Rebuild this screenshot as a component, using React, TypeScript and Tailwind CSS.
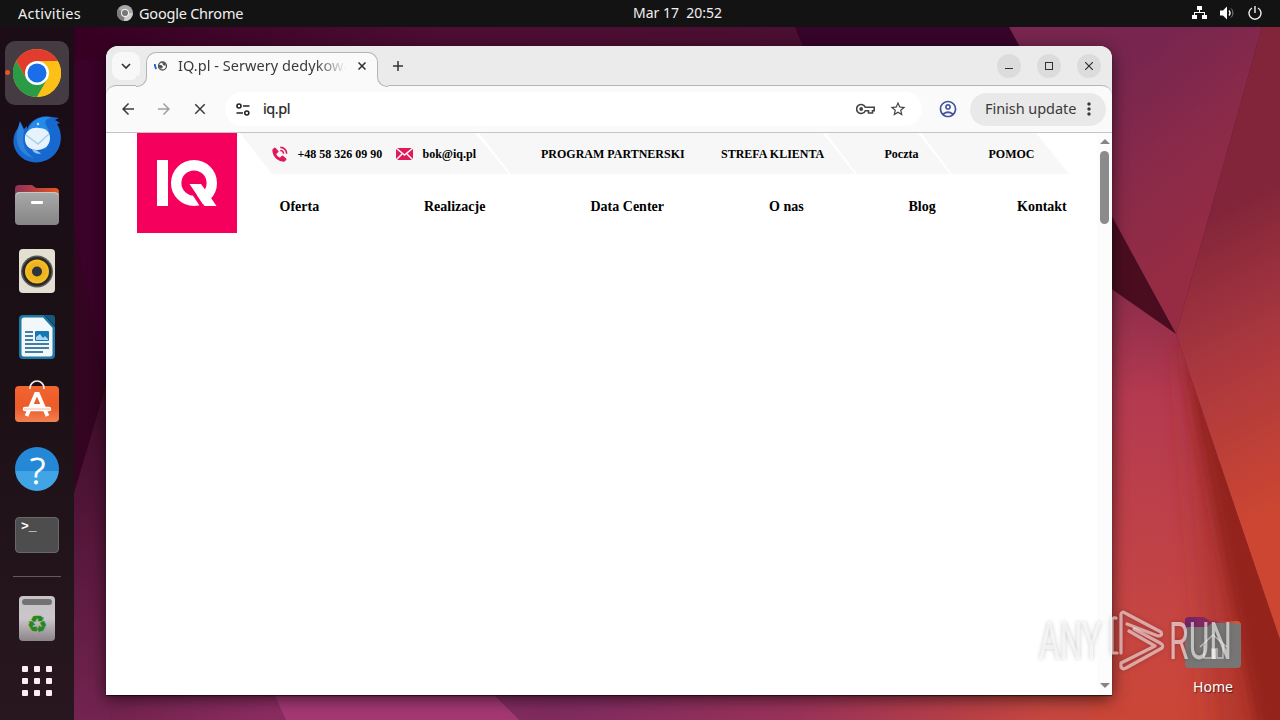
import type { ReactNode } from 'react';
import { BiSolidPhoneCall } from 'react-icons/bi';
import { MdArrowBack, MdArrowForward, MdClose, MdMoreVert, MdOutlineAccountCircle, MdStarBorder } from 'react-icons/md';

function Wallpaper() {
    return (
        <svg className="absolute inset-0" width="1280" height="720" viewBox="0 0 1280 720">
            <defs>
                <linearGradient id="top" x1="74" y1="0" x2="1010" y2="0" gradientUnits="userSpaceOnUse">
                    <stop offset="0" stopColor="#370023" />
                    <stop offset="0.4" stopColor="#4e0d34" />
                    <stop offset="1" stopColor="#48102f" />
                </linearGradient>
                <linearGradient id="left" x1="0" y1="390" x2="0" y2="720" gradientUnits="userSpaceOnUse">
                    <stop offset="0" stopColor="#3f0c2a" />
                    <stop offset="1" stopColor="#732450" />
                </linearGradient>
                <linearGradient id="bottom" x1="74" y1="0" x2="1280" y2="0" gradientUnits="userSpaceOnUse">
                    <stop offset="0" stopColor="#6c2149" />
                    <stop offset="0.16" stopColor="#8b2c60" />
                    <stop offset="0.4" stopColor="#7f2b60" />
                    <stop offset="0.6" stopColor="#9a3259" />
                    <stop offset="0.8" stopColor="#c4463f" />
                    <stop offset="1" stopColor="#ca4636" />
                </linearGradient>
                <linearGradient id="upper" x1="1090" y1="100" x2="1210" y2="250" gradientUnits="userSpaceOnUse">
                    <stop offset="0" stopColor="#78264f" />
                    <stop offset="0.5" stopColor="#8a2a49" />
                    <stop offset="1" stopColor="#962c43" />
                </linearGradient>
                <linearGradient id="right" x1="1200" y1="220" x2="1330" y2="480" gradientUnits="userSpaceOnUse">
                    <stop offset="0" stopColor="#82253a" />
                    <stop offset="0.45" stopColor="#a9373f" />
                    <stop offset="1" stopColor="#cc4632" />
                </linearGradient>
                <linearGradient id="lower" x1="0" y1="290" x2="0" y2="720" gradientUnits="userSpaceOnUse">
                    <stop offset="0" stopColor="#8c2c4a" />
                    <stop offset="0.25" stopColor="#b43a50" />
                    <stop offset="0.75" stopColor="#c54543" />
                    <stop offset="1" stopColor="#ca4636" />
                </linearGradient>
                <filter id="wide" x="-50%" y="-20%" width="200%" height="140%"><feGaussianBlur stdDeviation="14" /></filter>
                <filter id="narrow" x="-50%" y="-20%" width="200%" height="140%"><feGaussianBlur stdDeviation="7" /></filter>
                <clipPath id="facet"><path d="M1090 274L1176 334L1280 640V720H1090z" /></clipPath>
            </defs>
            <rect width="1280" height="720" fill="url(#top)" />
            <path d="M795 27H1010L1112 219V285H900z" fill="#37042a" />
            <rect y="60" width="300" height="400" fill="#3a0228" />
            <path d="M74 230L106 386L74 493z" fill="#330520" />
            <path d="M74 493L106 386L140 386V720H74z" fill="url(#left)" />
            <path d="M106 640H1280V720H106z" fill="url(#bottom)" />
            <path d="M74 640H110V720H74z" fill="url(#left)" />
            <path d="M250 640L286 720H519L440 640z" fill="#a43875" />
            <path d="M1009 27H1262L1176 334z" fill="url(#upper)" />
            <path d="M1262 27H1280V640L1176 334z" fill="url(#right)" />
            <path d="M1080 160L1176 334L1080 265z" fill="#4a0d20" />
            <path d="M1090 274L1176 334L1280 640V720H1090z" fill="url(#lower)" />
            <g clipPath="url(#facet)">
                <path d="M1180 330L1320 640V760H1215z" fill="#a02a20" fillOpacity="0.5" filter="url(#wide)" />
                <path d="M1180 335L1320 640V760H1262z" fill="#8e2019" fillOpacity="0.85" filter="url(#narrow)" />
            </g>
        </svg>
    );
}

function TopBar() {
    return (
        <header className="relative flex h-[27px] shrink-0 items-center justify-between bg-[#131313] pl-[18px] pr-[18px] text-[14.5px] text-[#f0f0f0]">
            <div className="flex w-[576px] items-center">
                <span className="w-[99px] tracking-[0.25px]">Activities</span>
                <svg className="-mt-px" width="16" height="16" viewBox="0 0 16 16">
                    <circle cx="8" cy="8" r="8" fill="#a8a8a8" />
                    <path d="M8 8L1 4A8 8 0 0 0 7 16z" fill="#7c7c7c" />
                    <path d="M8 8h7.8A8 8 0 0 1 7 16z" fill="#d0d0d0" />
                    <circle cx="8" cy="8" r="4" fill="#f2f2f2" />
                    <circle cx="8" cy="8" r="3" fill="#777" />
                </svg>
                <span className="ml-[6px] tracking-[-0.22px]">Google Chrome</span>
            </div>
            <span className="-mt-px flex-1 whitespace-pre pl-[39px] text-[14px] leading-[18px]">Mar 17  20:52</span>
            <div className="-mt-px flex items-center gap-[13px]">
                <svg width="15" height="14" viewBox="0 0 15 14" fill="#fff">
                    <path d="M5 0h5v4H8v2h5v3h2v4h-5V9h2V7H3v2h2v4H0V9h2V6h5V4H5z" />
                </svg>
                <svg width="15" height="14" viewBox="0 0 15 14" fill="none" stroke="#fff">
                    <path d="M0 4.5h3L7 .5v13l-4-4H0z" fill="#fff" stroke="none" />
                    <path d="M9 4.5c1.3 1.5 1.3 3.5 0 5" strokeWidth="1.3" />
                    <path d="M11 2.5c2.5 2.500 2.500 6.500 0 9" stroke="#888" />
                </svg>
                <svg width="14" height="14" viewBox="0 0 14 14" fill="none" stroke="#f0f0f0" strokeWidth="1.4">
                    <path d="M4 2A6 6 0 1 0 10 2M7 0v7" />
                </svg>
            </div>
        </header>
    );
}

function DockItem({ children, active }: { children: ReactNode; active?: boolean }) {
    return (
        <div className={active ? 'flex h-16 w-16 items-center justify-center rounded-[10px] bg-[#443c42]' : 'flex h-[66px] w-16 items-center justify-center'}>
            {children}
        </div>
    );
}

function Dock() {
    return (
        <aside className="relative flex w-[74px] shrink-0 flex-col items-center bg-gradient-to-b from-[#1b0c16] via-[#1b1016] to-[#29171f] pt-[14px]">
            <span className="absolute left-[5px] top-[43px] h-[5px] w-[5px] rounded-full bg-[#e95420]" />
            <DockItem active>
                <svg width="48" height="48" viewBox="0 0 48 48">
                    <circle cx="24" cy="24" r="24" fill="#fbc116" />
                    <path d="M24 0A24 24 0 0 1 44.8 12H24L13.6 30L3.2 12A24 24 0 0 1 24 0z" fill="#e33b2e" />
                    <path d="M3.2 12A24 24 0 0 0 24 48L34.4 30H13.6z" fill="#2a9c46" />
                    <path d="M44.8 12A24 24 0 0 1 24 48L34.4 30L24 12z" fill="#fbc116" />
                    <circle cx="24" cy="24" r="12" fill="#fff" />
                    <circle cx="24" cy="24" r="9.5" fill="#1a6ee8" />
                </svg>
            </DockItem>
            <div className="h-px" />
            <DockItem>
                <svg width="50" height="48" viewBox="0 0 50 48">
                    <path d="M15 14C19 4 30-1 40 2l7 1-4 2 5 3-3 1c6 9 5 23-3 31-9 9-24 10-33 2C0 34-1 22 6 13l2-7 4 8 3-3z" fill="#1769cf" />
                    <path d="M16 15C20 4 31 0 40 3c-7 0-8 4-5 9 5 7 3 17-2 22L18 24z" fill="#258bea" />
                    <path d="M5 17c-2 13 5 24 17 26C11 36 10 27 12 16l-4-9z" fill="#2e83df" />
                    <path d="M13 21c2-6 7-9 14-8 7 0 11 4 11 10 0 7-5 12-13 12-8 0-13-5-12-14z" fill="#e6f3fd" />
                    <path d="M14 20l12 9 11-10" fill="none" stroke="#a9cce9" strokeWidth="1.5" />
                    <path d="M20 34q6 1 9 5-8 0-9-5z" fill="#8cc5f3" />
                    <circle cx="26" cy="9" r="1.2" fill="#c2e3ff" />
                </svg>
            </DockItem>
            <DockItem>
                <svg width="44" height="42" viewBox="0 0 44 42">
                    <defs>
                        <linearGradient id="flap"><stop stopColor="#8d3158" /><stop offset="1" stopColor="#e95420" /></linearGradient>
                        <linearGradient id="steel" x2="0" y2="1"><stop stopColor="#a9a9a9" /><stop offset="1" stopColor="#858585" /></linearGradient>
                    </defs>
                    <path d="M0 12V5q0-4 4-4h13l4 3h19q4 0 4 4v5z" fill="url(#flap)" />
                    <rect y="8" width="44" height="33" rx="4" fill="url(#steel)" />
                    <path d="M1 11q1-2.5 4-2.5h34q3 0 4 2.5" fill="none" stroke="#c8c8c8" />
                    <rect x="16" y="17" width="12" height="3" rx="1" fill="#fff" />
                </svg>
            </DockItem>
            <DockItem>
                <svg width="36" height="44" viewBox="0 0 36 44">
                    <rect width="36" height="44" rx="4" fill="#e4dfd3" />
                    <circle cx="18" cy="22.5" r="16" fill="#595959" />
                    <circle cx="18" cy="22.5" r="14.5" fill="#292929" />
                    <circle cx="18" cy="22.5" r="12" fill="#f6bd20" />
                    <circle cx="18" cy="22.5" r="9.5" fill="#eeb322" />
                    <circle cx="18" cy="22.5" r="5" fill="#2c3339" />
                </svg>
            </DockItem>
            <DockItem>
                <svg width="36" height="44" viewBox="0 0 36 44">
                    <path d="M4 0h21l11 12v28q0 4-4 4H4q-4 0-4-4V4q0-4 4-4z" fill="#1c78a5" />
                    <path d="M25 0h8q3 0 3 3v8z" fill="#155a7e" />
                    <path d="M5 2.5h19L33.5 13v26q0 2.5-2.5 2.5H5Q2.5 41.5 2.5 39V5q0-2.500 2.500-2.500z" fill="#f2f7fa" />
                    <path d="M6 17h8M6 21h8M6 25h8M6 29h24M6 33h24M6 37h18" stroke="#0b5788" strokeWidth="1.7" />
                    <rect x="16" y="16" width="14" height="10" rx="1" fill="#1478b5" />
                    <path d="M17 25v-3l4-3 3 4 2-2 3 3v1z" fill="#a9d7ef" />
                </svg>
            </DockItem>
            <DockItem>
                <svg width="46" height="46" viewBox="0 -1 46 46">
                    <defs>
                        <linearGradient id="bag" x2="0" y2="1"><stop stopColor="#f26430" /><stop offset="0.6" stopColor="#ec5b2a" /><stop offset="1" stopColor="#f18152" /></linearGradient>
                    </defs>
                    <rect x="1" y="5" width="44" height="36" rx="4" fill="url(#bag)" />
                    <path d="M16 8V7a7 7 0 0 1 14 0v1" fill="none" stroke="#f8ece3" strokeWidth="1.7" />
                    <path d="M12.5 35L22 13h2l9.5 22M16 25h14" fill="none" stroke="#fff" strokeWidth="3.8" />
                    <path d="M11 28h24" stroke="#fff" strokeWidth="4.5" strokeLinecap="round" />
                    <path d="M10 28h26" stroke="#f4b79e" strokeWidth="1" />
                </svg>
            </DockItem>
            <DockItem>
                <div className="flex h-11 w-11 items-center justify-center rounded-full bg-gradient-to-b from-[#2488d6] from-55% to-[#40a4e5] to-55% pl-px font-['Open_Sans'] text-[37px] font-light leading-none text-white [-webkit-text-stroke:0.9px_#fff]">?</div>
            </DockItem>
            <DockItem>
                <div className="h-9 w-11 rounded-[4px] border border-[#686868] bg-[#4d4d4d] pl-[5px] pt-[1px] font-['Liberation_Mono'] text-[13px] font-bold leading-[16px] text-white">&gt;_</div>
            </DockItem>
            <div className="mt-[8px] h-px w-12 bg-[#65585f]" />
            <div className="mt-[19px] flex h-[45px] w-9 flex-col items-center rounded-[4px] bg-gradient-to-b from-[#c6c3c4] via-[#cac6c9] to-[#8b858a] pt-[3px]">
                <div className="h-[6px] w-[30px] rounded-[3px] bg-[#727272]" />
                <span className="mt-[7px] font-['DejaVu_Sans'] text-[23px] leading-[24px] text-[#26881c] [-webkit-text-stroke:0.5px_#26881c]">♻</span>
            </div>
            <div className="mt-[25px] grid grid-cols-3 gap-[6px]">
                {Array.from({ length: 9 }, (_, i) => (
                    <span key={i} className="h-[6px] w-[6px] rounded-[1px] bg-[#fbeff5]" />
                ))}
            </div>
        </aside>
    );
}

function TabStrip() {
    return (
        <div className="flex h-[40px] items-start bg-[#ebebeb] pl-[6px]">
            <div className="mt-[6px] flex h-7 w-7 items-center justify-center rounded-[9px] bg-[#f8f8f8]">
                <svg width="10" height="6" viewBox="0 0 10 6" fill="none" stroke="#333" strokeWidth="1.7"><path d="M1 1l4 4 4-4" /></svg>
            </div>
            <div className="relative z-10 ml-[6px] mt-[6px] flex h-[35px] w-[232px] rounded-t-[10px] border border-b-0 border-[#b5b5b5] bg-[#fafafa] pl-[7px]">
                <span className="absolute -left-[11px] bottom-0 h-[11px] w-[11px] bg-[#fafafa]">
                    <span className="block h-[11px] w-[11px] rounded-br-[10px] border-b border-r border-[#b5b5b5] bg-[#ebebeb]" />
                </span>
                <span className="absolute -right-[11px] bottom-0 h-[11px] w-[11px] bg-[#fafafa]">
                    <span className="block h-[11px] w-[11px] rounded-bl-[10px] border-b border-l border-[#b5b5b5] bg-[#ebebeb]" />
                </span>
                <svg className="mt-[6px]" width="14" height="14" viewBox="0 0 14 14" fill="none">
                    <path d="M.8 5q0 3 1.5 5" stroke="#1f5fd0" strokeWidth="1.8" />
                    <circle cx="8.5" cy="7" r="4" stroke="#50545a" strokeWidth="1.3" />
                    <path d="M4.5 6h3l1.5 2-2 2-2.5-2zM8 3l3.5 1.5V7L9 6z" fill="#50545a" />
                </svg>
                <span className="ml-[10px] mt-[2px] w-[171px] overflow-hidden whitespace-nowrap text-[14.5px] leading-[20px] tracking-[0.05px] text-[#3a3a3a] [mask-image:linear-gradient(to_right,#000_138px,transparent_168px)]">IQ.pl - Serwery dedykowa</span>
                <svg className="ml-[9px] mt-[9px] shrink-0" width="8" height="8" viewBox="0 0 8 8" stroke="#2c2c2c" strokeWidth="1.5"><path d="M.5.5l7 7M7.5.5l-7 7" /></svg>
            </div>
            <svg className="ml-[15px] mt-[15px]" width="10" height="10" viewBox="0 0 10 10" stroke="#333" strokeWidth="1.5"><path d="M5 0v10M0 5h10" /></svg>
            <div className="ml-auto mr-[11px] mt-[8px] flex gap-4">
                <span className="flex h-6 w-6 items-center justify-center rounded-full bg-[#dcdcdc]">
                    <span className="mt-[5px] h-px w-[8px] bg-[#303030]" />
                </span>
                <span className="flex h-6 w-6 items-center justify-center rounded-full bg-[#dcdcdc]">
                    <span className="h-[8px] w-[8px] border border-[#303030]" />
                </span>
                <span className="flex h-6 w-6 items-center justify-center rounded-full bg-[#dcdcdc]">
                    <svg width="8" height="8" viewBox="0 0 8 8" stroke="#303030" strokeWidth="1.2"><path d="M0 0l8 8M8 0L0 8" /></svg>
                </span>
            </div>
        </div>
    );
}

function Toolbar() {
    return (
        <div className="-mt-px flex h-[48px] items-center rounded-t-[10px] border-b border-t border-b-[#c4c4c4] border-t-[#b5b5b5] bg-[#fafafa] pl-[13px] pr-[6px]">
            <MdArrowBack className="text-[#3c3c3c]" size={18} />
            <MdArrowForward className="ml-[18px] text-[#a0a0a0]" size={18} />
            <MdClose className="ml-[18px] text-[#3c3c3c]" size={18} />
            <div className="ml-[16px] flex h-[34px] w-[697px] items-center rounded-full bg-white pl-[11px]">
                <svg width="14" height="13" viewBox="0 0 14 13" fill="none" stroke="#222" strokeWidth="1.6">
                    <circle cx="3" cy="3" r="2" />
                    <path d="M7 3h6.5M0.5 10H7" />
                    <circle cx="10.8" cy="10" r="2" />
                </svg>
                <span className="ml-[13px] text-[14.5px] tracking-[-0.4px] text-[#1f1f1f] [-webkit-text-stroke:0.2px_#1f1f1f]">iq.pl</span>
                <svg className="ml-auto" width="19" height="12" viewBox="0 0 19 12" fill="none" stroke="#444" strokeWidth="1.6">
                    <path d="M9.3 4.3A4.5 4.5 0 1 0 9.3 7.7H12.5V10H16.5V7.7H18.2V4.3z" />
                    <circle cx="5.2" cy="6" r="1.9" fill="#444" stroke="none" />
                </svg>
                <MdStarBorder className="ml-[14px] mr-[15px] text-[#444]" size={18} />
            </div>
            <MdOutlineAccountCircle className="ml-[16px] shrink-0 text-[#41539b]" size={20} />
            <div className="ml-auto flex h-[33px] w-[136px] shrink-0 items-center rounded-full bg-[#e9e9e9] pl-[15px] text-[14.5px] tracking-[-0.05px] text-[#3a3a3a]">
                <span className="w-[94px] whitespace-nowrap">Finish update</span>
                <MdMoreVert size={20} />
            </div>
        </div>
    );
}

function Logo() {
    return (
        <svg className="shrink-0" width="100" height="100" viewBox="0 0 100 100">
            <rect width="100" height="100" fill="#f6005e" />
            <rect x="20" y="27" width="11" height="46" fill="#fff" />
            <circle cx="57" cy="50" r="17.8" fill="none" stroke="#fff" strokeWidth="10.4" />
            <path d="M48.5 51H52.500L68.500 75H64z" fill="#f6005e" />
            <path d="M52.5 51H64L68 56.500L74 65L79.500 73H67.500z" fill="#fff" />
        </svg>
    );
}

function Page() {
    return (
        <div className="flex h-[562px] bg-white font-['Liberation_Serif',serif] font-bold text-black">
            <div className="flex flex-1 pl-[31px]">
                <Logo />
                <div className="flex flex-col">
                    <div className="ml-[3px] flex h-[41px] text-[12px]">
                        <div className="flex w-[269px] items-center bg-[#f7f7f7] pl-[30px] [clip-path:polygon(0_0,235px_0,100%_100%,32px_100%)]">
                            <BiSolidPhoneCall className="mt-px text-[#e0195a]" size={19} />
                            <span className="ml-[8.5px] w-[98px]">+48 58 326 09 90</span>
                            <svg className="mt-px" width="17" height="12" viewBox="0 0 17 12">
                                <rect width="17" height="12" fill="#e0195a" />
                                <path d="M0 0l8.5 7L17 0M0 12l6-6M17 12l-6-6" fill="none" stroke="#f7f7f7" strokeWidth="1.5" />
                            </svg>
                            <span className="ml-[10px]">bok@iq.pl</span>
                        </div>
                        <div className="-ml-[32px] flex w-[378px] items-center bg-[#f7f7f7] pl-[64px] [clip-path:polygon(2px_0,346px_0,100%_100%,34px_100%)]">
                            <span className="w-[180px]">PROGRAM PARTNERSKI</span>
                            <span>STREFA KLIENTA</span>
                        </div>
                        <div className="-ml-[29px] flex w-[124px] items-center bg-[#f7f7f7] pl-[58.5px] [clip-path:polygon(0_0,92px_0,100%_100%,31px_100%)]">Poczta</div>
                        <div className="-ml-[29px] flex w-[148px] items-center bg-[#f7f7f7] pl-[67.5px] [clip-path:polygon(0_0,115px_0,100%_100%,31px_100%)]">POMOC</div>
                    </div>
                    <nav className="ml-[42.5px] mt-[23px] flex text-[14px] leading-[20px]">
                        <span className="w-[144.5px]">Oferta</span>
                        <span className="w-[166.5px]">Realizacje</span>
                        <span className="w-[178.5px]">Data Center</span>
                        <span className="w-[139.5px]">O nas</span>
                        <span className="w-[108.5px]">Blog</span>
                        <span>Kontakt</span>
                    </nav>
                </div>
            </div>
            <div className="flex w-[15px] shrink-0 flex-col items-center justify-between bg-[#fcfcfc] pb-[7px] pt-[6px]">
                <div className="flex flex-col items-center">
                    <svg width="10" height="5" viewBox="0 0 10 5" fill="#858585"><path d="M0 5l5-5 5 5z" /></svg>
                    <div className="mt-[7px] h-[73px] w-[9px] rounded-full bg-[#8b8b8b]" />
                </div>
                <svg width="10" height="5" viewBox="0 0 10 5" fill="#858585"><path d="M0 0l5 5 5-5z" /></svg>
            </div>
        </div>
    );
}

function HomeFolder() {
    return (
        <div className="absolute left-[1173px] top-[616px] flex w-20 flex-col items-center">
            <svg width="56" height="53" viewBox="0 0 56 53">
                <defs>
                    <linearGradient id="homeFlap"><stop stopColor="#70246d" /><stop offset="0.4" stopColor="#8b285b" /><stop offset="1" stopColor="#ef5525" /></linearGradient>
                </defs>
                <path d="M0 12V5q0-4 4-4h15l6 4h26q5 0 5 4v10H0z" fill="url(#homeFlap)" />
                <path d="M0 15q0-4 4-4h18l5-4h25q4 0 4 4v37q0 4-4 4H4q-4 0-4-4z" fill="#777675" />
                <path d="M15 31L28 19l14 12M19 29v13h8v-9h5v9h6V29" fill="none" stroke="#c5c2c0" strokeWidth="1.5" />
                <rect x="27" y="33" width="4" height="10" fill="#deddda" />
            </svg>
            <span className="mt-[8px] text-[14px] leading-[20px] text-white [text-shadow:1px_1px_1px_rgba(0,0,0,0.5)]">Home</span>
        </div>
    );
}

function Watermark() {
    return (
        <svg className="absolute left-[1030px] top-[600px] [filter:drop-shadow(0_0_2px_rgba(0,0,0,0.35))]" width="215" height="80" viewBox="0 0 215 80">
            <g fill="#fff" fillOpacity="0.6" fontFamily="Roboto, sans-serif" fontWeight="400" fontSize="52">
                <text x="9" y="59" textLength="62" lengthAdjust="spacingAndGlyphs">ANY</text>
                <text x="139" y="59" textLength="63" lengthAdjust="spacingAndGlyphs">RUN</text>
            </g>
            <g fill="none" stroke="#fff" strokeOpacity="0.55" strokeWidth="3.2" strokeLinejoin="round" strokeLinecap="round">
                <path d="M91 53V14Q92 11 95 13L131 32Q133 36 128 36L97 24" />
                <path d="M99 31L125 46L91 63V67Q93 70 96 68L132 48Q134 45 130 43L104 29" />
                <path d="M86 18Q82 17 82 21V53H87" />
            </g>
        </svg>
    );
}

export default function App() {
    return (
        <div className="relative flex h-[720px] w-[1280px] flex-col overflow-hidden bg-[#370023] font-['Noto_Sans',sans-serif]">
            <Wallpaper />
            <TopBar />
            <div className="flex flex-1">
                <Dock />
            </div>
            <HomeFolder />
            <main className="absolute left-[106px] top-[46px] h-[649px] w-[1006px] overflow-hidden rounded-t-[12px] bg-[#ebebeb] shadow-[0_1px_1px_rgba(0,0,0,0.6),0_4px_16px_rgba(0,0,0,0.6)]">
                <TabStrip />
                <Toolbar />
                <Page />
            </main>
            <Watermark />
        </div>
    );
}
